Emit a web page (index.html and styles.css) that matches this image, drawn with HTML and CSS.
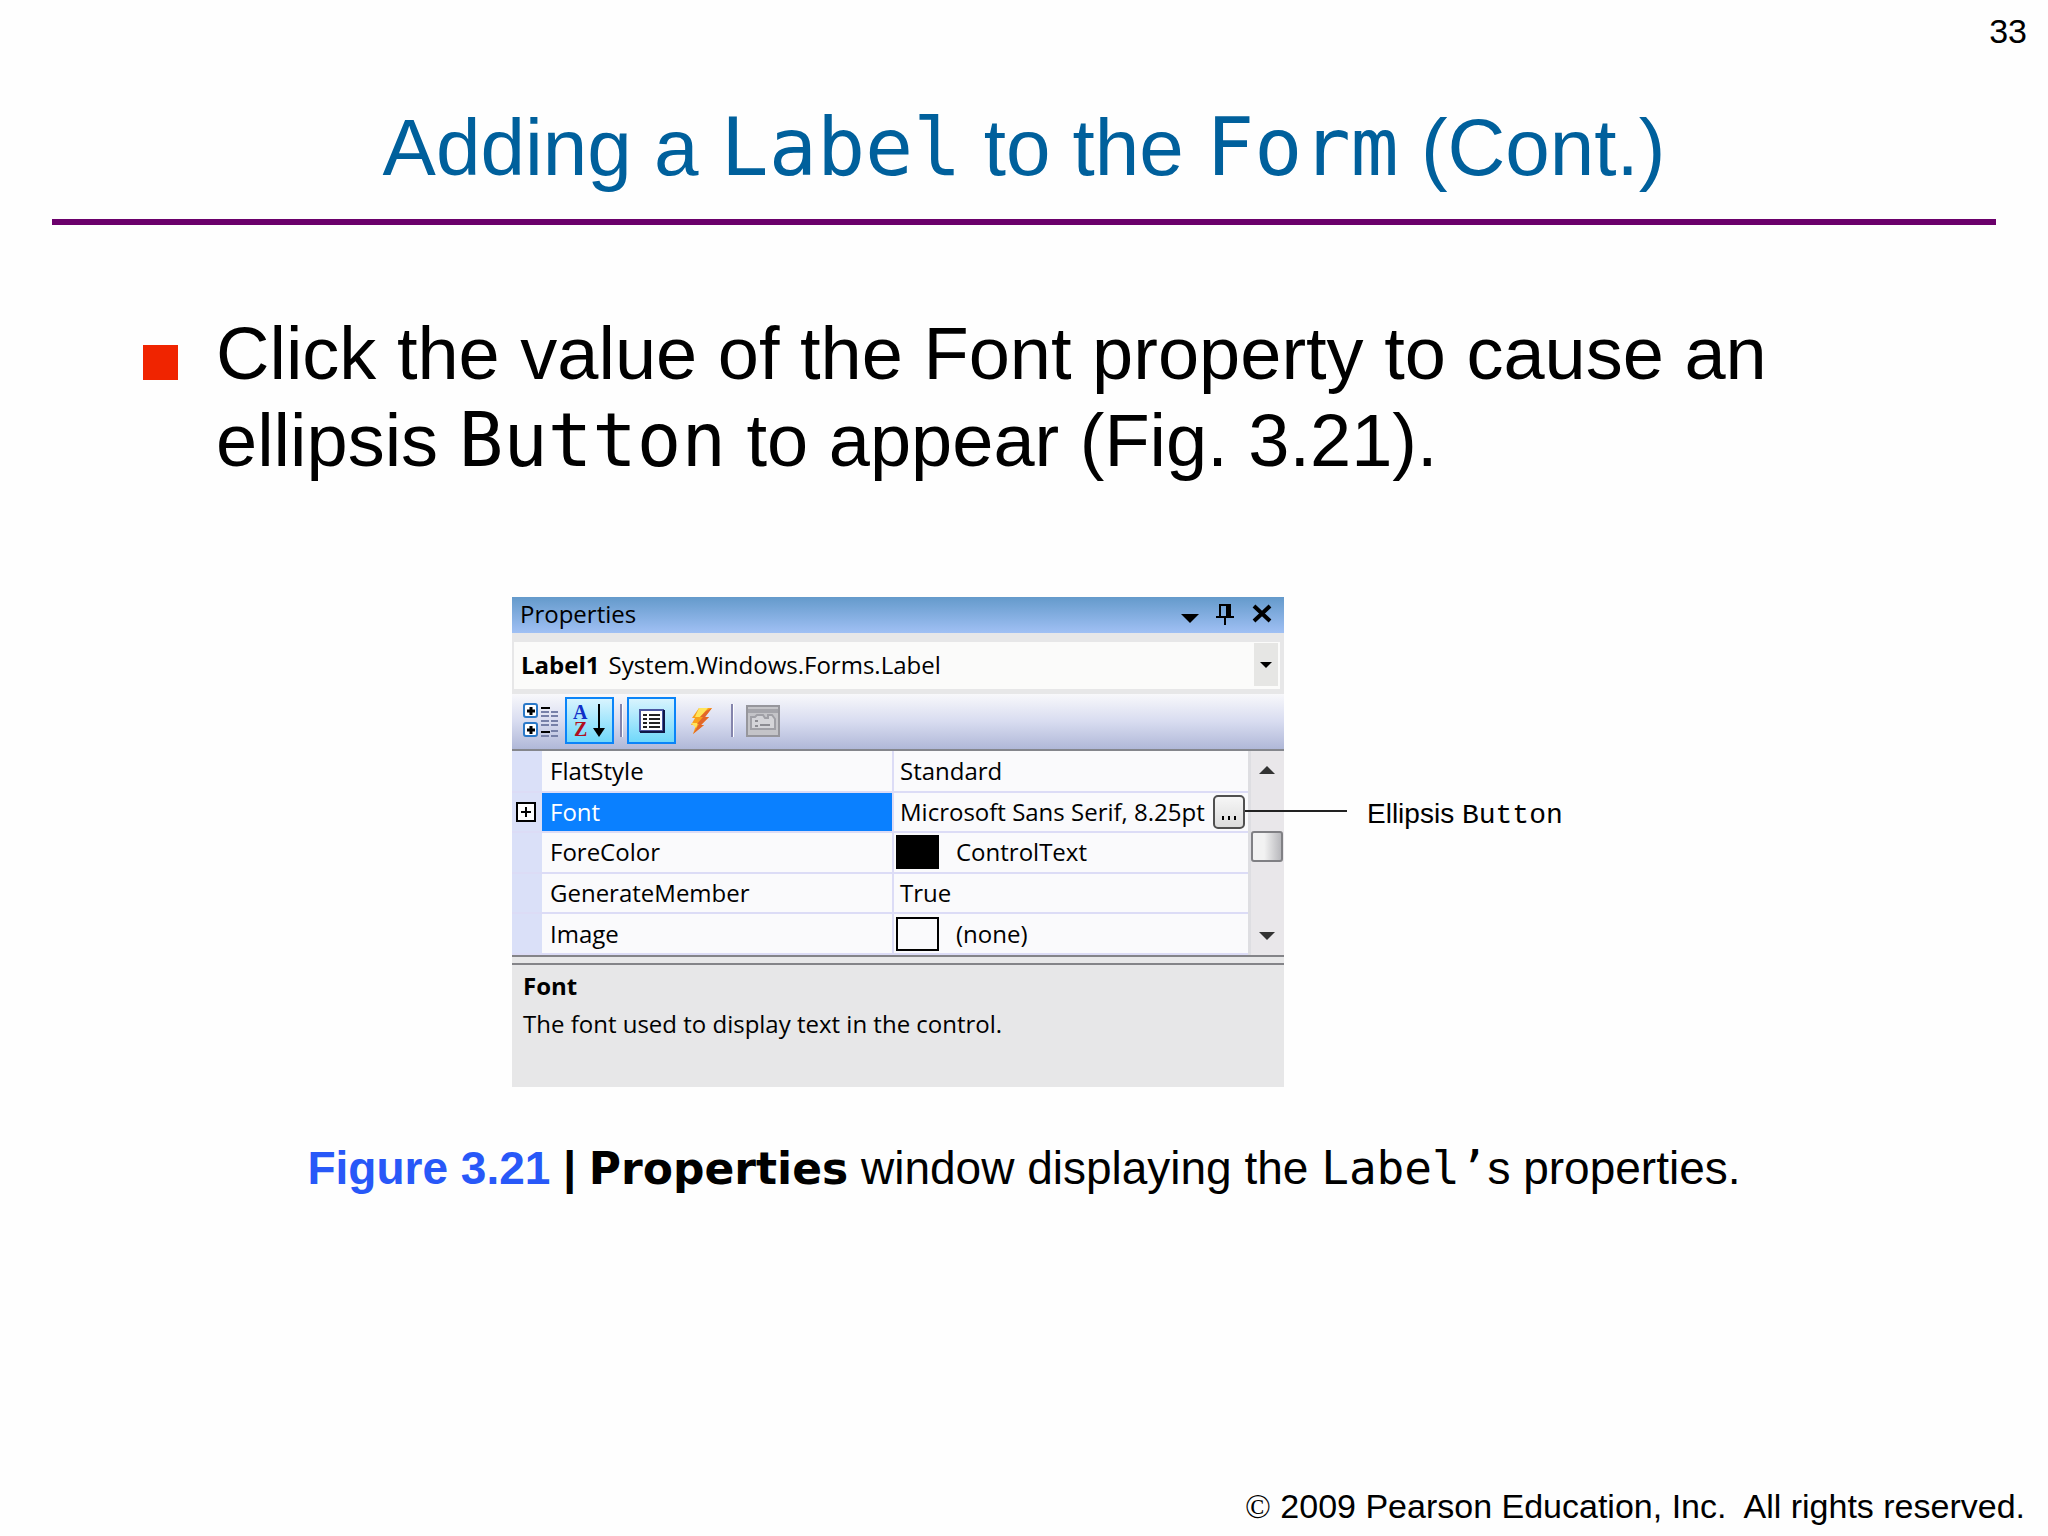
FILE: index.html
```
<!DOCTYPE html>
<html lang="en">
<head>
    <meta charset="UTF-8">
    <meta name="viewport" content="width=device-width, initial-scale=1.0">
    <title>Adding a Label to the Form (Cont.)</title>
    <link rel="stylesheet" href="styles.css">
</head>
<body>
    <div class="page-number">33</div>

    <header>
        <h1>Adding a <code>Label</code> to the <code>Form</code> (Cont.)</h1>
    </header>

    <main>
        <ul class="points">
            <li>Click the value of the Font property to cause an ellipsis <code>Button</code> to appear (Fig. 3.21).</li>
        </ul>

        <figure>
            <div class="figure-row">
                <div class="window">
                    <div class="title-bar">
                        <span>Properties</span>
                        <div class="title-buttons">
                            <button aria-label="Window menu"><svg width="20" height="24" viewBox="0 0 20 24"><path d="M1 12h18l-9 9z"/></svg></button>
                            <button aria-label="Auto hide"><svg width="20" height="24" viewBox="0 0 20 24"><path d="M4 3h10v12H4z" fill="none" stroke="#000" stroke-width="2"/><path d="M10 3h4v12h-4zM0 14h18v2H0zM8 16h2v7H8z"/></svg></button>
                            <button aria-label="Close"><svg width="20" height="24" viewBox="0 0 20 24"><path d="M2 4l16 15M18 4L2 19" stroke="#000" stroke-width="4"/></svg></button>
                        </div>
                    </div>

                    <div class="combo">
                        <label for="object">Label1</label>
                        <select id="object">
                            <option>System.Windows.Forms.Label</option>
                        </select>
                        <span class="combo-arrow"><svg width="12" height="8" viewBox="0 0 12 8"><path d="M0 1h12L6 7z"/></svg></span>
                    </div>

                    <div class="toolbar">
                        <button aria-label="Categorized">
                            <svg width="36" height="36" viewBox="0 0 36 36">
                                <g fill="#fff" stroke="#2a78c8" stroke-width="2"><rect x="1" y="1" width="13" height="13" rx="2"/><rect x="1" y="20" width="13" height="13" rx="2"/></g>
                                <path d="M4 8h8M8 4v8M4 27h8M8 23v8" stroke="#000" stroke-width="3"/>
                                <path d="M18 5h9M18 29h9" stroke="#000" stroke-width="2"/>
                                <path d="M18 9h8M28 9h7M18 13h8M28 13h7M18 18h8M28 18h7M18 22h8M28 22h7M28 28h7M18 33h8M28 33h7" stroke="#7680a8" stroke-width="2"/>
                            </svg>
                        </button>
                        <button class="on" aria-label="Alphabetical">
                            <svg width="36" height="40" viewBox="0 0 36 40">
                                <text x="1" y="18" class="az" fill="#1030c8">A</text>
                                <text x="2" y="35" class="az" fill="#b01020">Z</text>
                                <path d="M27 3v30" stroke="#000" stroke-width="2"/><path d="M21 27h12l-6 9z"/>
                            </svg>
                        </button>
                        <i class="divider"></i>
                        <button class="on" aria-label="Properties">
                            <svg width="28" height="26" viewBox="0 0 28 26">
                                <path d="M2 2h23v21H2z" fill="#fff" stroke="#4a56a0" stroke-width="2"/>
                                <path d="M26 2v22H2" fill="none" stroke="#101848" stroke-width="2"/>
                                <path d="M5 7h4M5 11h4M5 15h4M5 19h4M11 7h11M11 11h11M11 15h11M11 19h11" stroke="#222" stroke-width="2"/>
                            </svg>
                        </button>
                        <button aria-label="Events">
                            <svg width="24" height="28" viewBox="0 0 24 28">
                                <path d="M10 1h13l-7 9h4l-8 8h3L4 27l3-9H2l4-7H3z" fill="#f9a01b"/>
                                <path d="M10 1h9l-8 9H6zM2 16h7l-2 5z" fill="#ffe45a"/>
                                <path d="M23 1l-7 9h4l-8 8h3L4 27l6-10h-2l6-7h-3l6-6z" fill="#e2662a"/>
                            </svg>
                        </button>
                        <i class="divider"></i>
                        <button aria-label="Property pages">
                            <svg width="34" height="32" viewBox="0 0 34 32">
                                <path d="M1 1h32v30H1z" fill="#c4c4c8" stroke="#96969c" stroke-width="2"/>
                                <path d="M2 4h30v4H2z" fill="#a4a4aa"/>
                                <path d="M5 12h4l2-2h6l2 3h3v-3h4l3 4v10H5z" fill="#d4d4d8" stroke="#a0a0a6" stroke-width="2"/>
                                <path d="M9 16h3M9 21h3M14 20h10" stroke="#8c8c92" stroke-width="2"/>
                            </svg>
                        </button>
                    </div>

                    <div class="grid">
                        <table>
                            <tr>
                                <td class="gutter"></td>
                                <th>FlatStyle</th>
                                <td>Standard</td>
                            </tr>
                            <tr class="selected">
                                <td class="gutter"><button class="expand" aria-label="Expand Font"><svg width="20" height="20" viewBox="0 0 20 20"><path d="M1 1h18v18H1z" fill="#fff" stroke="#000" stroke-width="2"/><path d="M5 10h10M10 5v10" stroke="#000" stroke-width="2"/></svg></button></td>
                                <th>Font</th>
                                <td><div class="value">Microsoft Sans Serif, 8.25pt <button class="ellipsis" aria-label="Edit font"><svg width="18" height="6" viewBox="0 0 18 6"><path d="M2 1h2v4H2zM8 1h2v4H8zM14 1h2v4h-2z"/></svg></button></div></td>
                            </tr>
                            <tr>
                                <td class="gutter"></td>
                                <th>ForeColor</th>
                                <td><div class="value"><span class="swatch black"></span>ControlText</div></td>
                            </tr>
                            <tr>
                                <td class="gutter"></td>
                                <th>GenerateMember</th>
                                <td>True</td>
                            </tr>
                            <tr>
                                <td class="gutter"></td>
                                <th>Image</th>
                                <td><div class="value"><span class="swatch"></span>(none)</div></td>
                            </tr>
                        </table>
                        <div class="scrollbar">
                            <button aria-label="Scroll up"><svg width="16" height="10" viewBox="0 0 16 10"><path d="M0 9l8-8 8 8z" fill="#333"/></svg></button>
                            <span class="thumb"></span>
                            <button aria-label="Scroll down"><svg width="16" height="10" viewBox="0 0 16 10"><path d="M0 1l8 8 8-8z" fill="#333"/></svg></button>
                        </div>
                    </div>

                    <div class="description">
                        <strong>Font</strong>
                        <p>The font used to display text in the control.</p>
                    </div>
                </div>

                <div class="callout">Ellipsis <code>Button</code></div>
            </div>

            <figcaption><b class="number">Figure 3.21</b> <b>|</b> <b class="ui">Properties</b> window displaying the <code>Label’</code>s properties.</figcaption>
        </figure>
    </main>

    <footer><span class="copy">©</span> 2009 Pearson Education, Inc.&nbsp; All rights reserved.</footer>
</body>
</html>
```
FILE: styles.css
```
* {
    box-sizing: border-box;
}
body {
    margin: 0;
    min-height: 100vh;
    display: flex;
    flex-direction: column;
    background-color: #fefefe;
    color: #000;
    font-family: "Liberation Sans", Arial, sans-serif;
}
code {
    font-family: "DejaVu Sans Mono", monospace;
    line-height: 1;
}
button {
    display: flex;
    align-items: center;
    justify-content: center;
    margin: 0;
    padding: 0;
    border: none;
    background: none;
    cursor: pointer;
}
svg {
    display: block;
}
.page-number {
    padding: 11px 21px 0;
    font-size: 34px;
    line-height: 40px;
    text-align: right;
}
header {
    margin: 0 52px;
    padding: 51px 0 25px;
    border-bottom: 6px solid #6b006b;
}
h1 {
    margin: 0;
    color: #00609c;
    font-size: 80px;
    font-weight: normal;
    line-height: 92px;
    text-align: center;
}
.points {
    margin: 0;
    padding: 85px 200px 0 216px;
    list-style: none;
    font-size: 74px;
    line-height: 87px;
}
.points li {
    position: relative;
}
.points li::before {
    content: "";
    position: absolute;
    left: -73px;
    top: 35px;
    width: 35px;
    height: 35px;
    background-color: #f02400;
}
figure {
    margin: 113px 0 0;
}
.figure-row {
    display: flex;
    align-items: flex-start;
    padding-left: 25%;
}

/* properties window */
.window {
    width: 772px;
    background-color: #e7e7e8;
    font-family: "Open Sans", "Noto Sans", sans-serif;
    font-size: 24px;
    line-height: 32px;
}
.title-bar {
    display: flex;
    justify-content: space-between;
    align-items: center;
    height: 36px;
    padding: 0 12px 2px 8px;
    background: linear-gradient(#649acb, #a0c0f4);
}
.title-buttons {
    display: flex;
    gap: 16px;
}
.combo {
    display: flex;
    align-items: center;
    height: 47px;
    margin: 9px 4px 5px 2px;
    padding: 1px 2px 3px 7px;
    background-color: #fbfbfa;
}
.combo label {
    font-weight: bold;
}
.combo select {
    flex: 1;
    margin-left: 9px;
    padding: 0;
    border: none;
    background: none;
    color: #000;
    font: inherit;
    appearance: none;
}
.combo-arrow {
    display: flex;
    align-items: center;
    justify-content: center;
    width: 24px;
    height: 43px;
    background-color: #e6e6e4;
}
.toolbar {
    display: flex;
    align-items: center;
    height: 57px;
    padding: 0 4px 2px;
    border-bottom: 2px solid #84868c;
    background: linear-gradient(#f8f8fb, #d8dcf0 50%, #b0b8d8);
}
.toolbar button {
    width: 49px;
    height: 47px;
}
.toolbar .on {
    border: 2px solid #0a84f8;
    background: linear-gradient(#d8f4fe, #70d8fa);
}
.az {
    font: bold 20px "Liberation Serif", serif;
}
.divider {
    width: 3px;
    height: 33px;
    margin: 0 4px 0 6px;
    border-left: 2px solid #8484ac;
    border-right: 1px solid #fff;
}
.grid {
    display: flex;
    border-bottom: 2px solid #848488;
}
table {
    flex: 1;
    height: 204px;
    border-collapse: collapse;
    table-layout: fixed;
    background-color: #fafafc;
}
th, td {
    padding: 0 0 0 6px;
    height: 39px;
    border-bottom: 2px solid #dcdcf6;
    font-weight: normal;
    text-align: left;
}
th {
    width: 351px;
    padding-left: 8px;
    border-right: 2px solid #dcdcf6;
}
.gutter {
    width: 30px;
    padding: 0 0 0 4px;
    background-color: #dae0f8;
}
.selected th {
    background-color: #0a80ff;
    color: #fff;
}
.value {
    display: flex;
    align-items: center;
}
.ellipsis {
    align-items: flex-end;
    width: 32px;
    height: 34px;
    margin-left: auto;
    margin-right: 3px;
    padding-bottom: 6px;
    border: 2px solid #505050;
    border-radius: 5px;
    background: linear-gradient(#f6f6f6, #dcdcdc);
}
.swatch {
    width: 43px;
    height: 34px;
    margin-left: -4px;
    margin-right: 17px;
    border: 2px solid #000;
}
.black {
    background-color: #000;
}
.scrollbar {
    display: flex;
    flex-direction: column;
    justify-content: space-between;
    align-items: center;
    width: 36px;
    padding: 14px 2px 14px 0;
    border-left: 3px solid #dedee2;
    background-color: #e9e7ea;
}
.thumb {
    width: 32px;
    height: 31px;
    margin-bottom: 14px;
    border: 2px solid #808084;
    border-radius: 3px;
    background: linear-gradient(to right, #f2f2f2 40%, #b8b8bc);
}
.description {
    height: 124px;
    margin-top: 6px;
    padding: 5px 11px;
    border-top: 2px solid #848488;
}
.description p {
    margin: 6px 0 0;
}

.callout {
    position: relative;
    margin: 201px 0 0 83px;
    font-size: 28px;
    line-height: 32px;
}
.callout code {
    font-family: "Liberation Mono", monospace;
}
/* leader line back to the ellipsis button */
.callout::before {
    content: "";
    position: absolute;
    left: -122px;
    top: 12px;
    width: 102px;
    height: 2px;
    background-color: #222;
}
figcaption {
    margin-top: 55px;
    font-size: 46px;
    line-height: 52px;
    text-align: center;
}
.number {
    color: #2858f8;
}
.ui {
    font-family: "DejaVu Sans", sans-serif;
    font-size: 44px;
    line-height: 1;
}
footer {
    margin-top: auto;
    padding: 0 23px 9px;
    font-size: 34px;
    line-height: 40px;
    text-align: right;
}
.copy {
    font-family: "Liberation Serif", serif;
}
```
